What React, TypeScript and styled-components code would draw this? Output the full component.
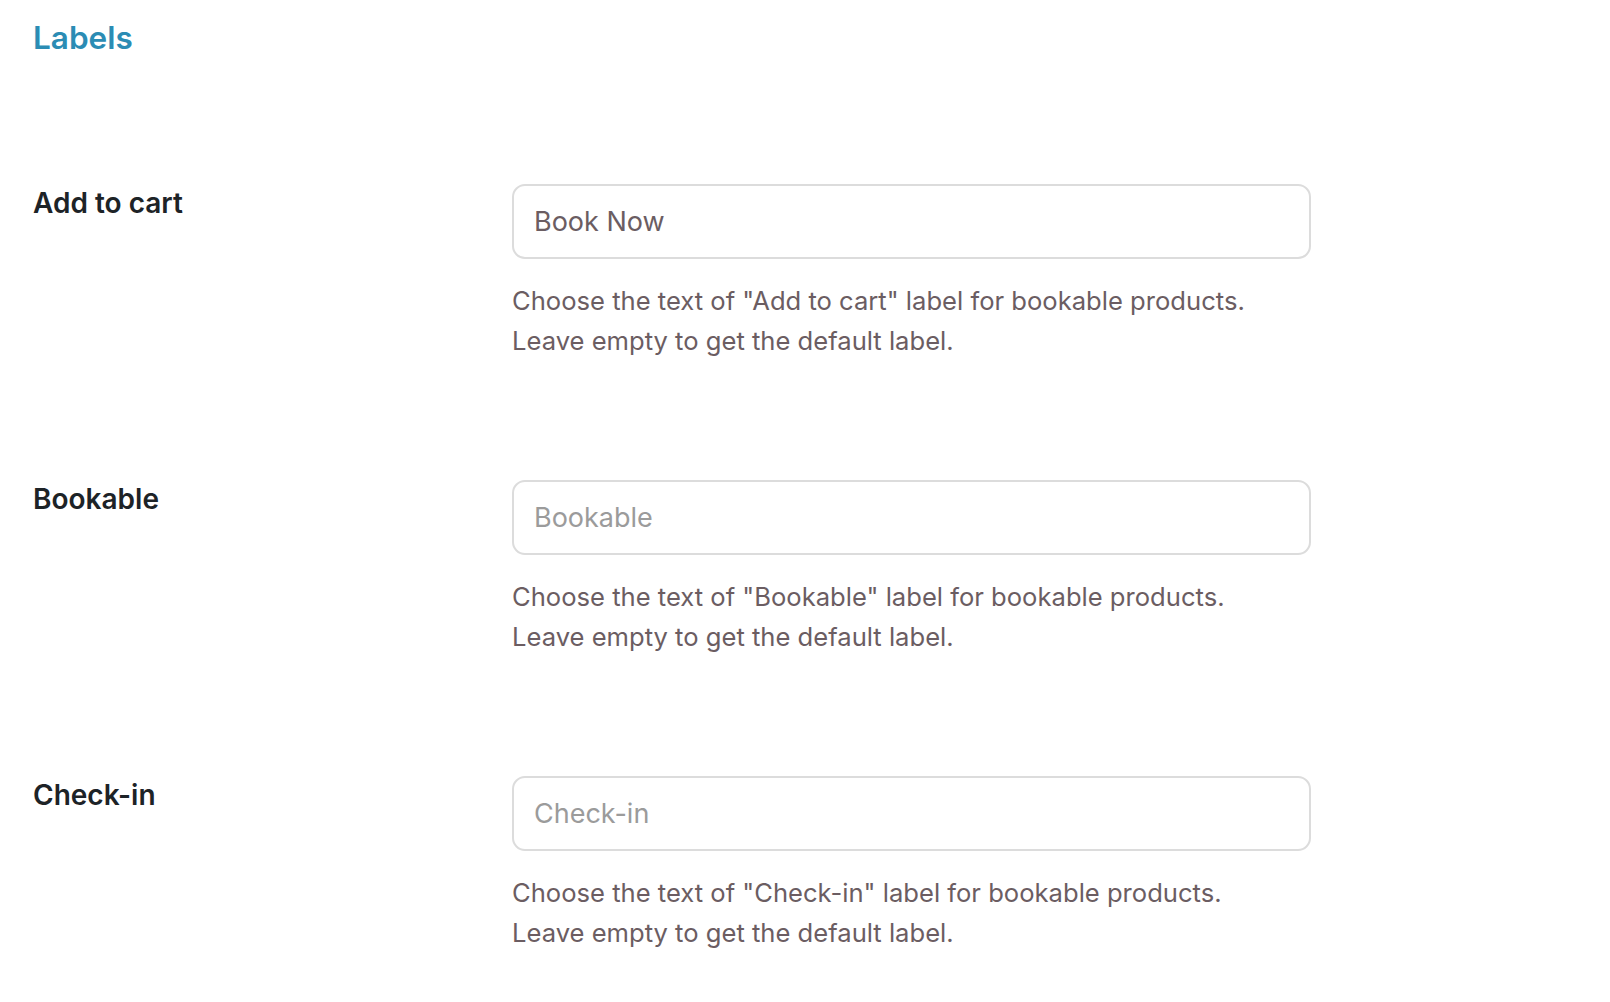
import React from "react";
import styled, { createGlobalStyle } from "styled-components";

const GlobalStyle = createGlobalStyle`
  html, body {
    margin: 0;
    padding: 0;
    background: #ffffff;
  }
  body {
    font-family: Inter, "Noto Sans", "Liberation Sans", sans-serif;
    -webkit-font-smoothing: antialiased;
  }
`;

const Page = styled.main`
  padding: 19px 0 0 33px;
`;

const Heading = styled.h2`
  margin: 0;
  font-size: 31.5px;
  line-height: 38px;
  font-weight: 600;
  color: #2b8cb4;
`;

const Rows = styled.div`
  display: flex;
  flex-direction: column;
  gap: 119px;
  margin-top: 127px;
`;

const Row = styled.section`
  display: grid;
  grid-template-columns: 479px 799px;
  align-items: start;
`;

const Label = styled.label`
  font-size: 28px;
  line-height: 38px;
  font-weight: 600;
  color: #1d2327;
`;

const Field = styled.div`
  display: flex;
  flex-direction: column;
`;

const Input = styled.input`
  box-sizing: border-box;
  width: 100%;
  height: 75px;
  padding: 0 20px;
  border: 2px solid #dcdcdc;
  border-radius: 13px;
  background: #ffffff;
  font-family: inherit;
  font-size: 27px;
  color: #6b5d62;
  outline: none;

  &::placeholder {
    color: #9b9b9b;
    opacity: 1;
  }
`;

const Description = styled.p`
  margin: 22px 0 0;
  font-size: 25.6px;
  line-height: 40px;
  color: #6b5d62;
`;

interface LabelSetting {
  id: string;
  title: string;
  value: string;
}

const settings: LabelSetting[] = [
  { id: "add-to-cart", title: "Add to cart", value: "Book Now" },
  { id: "bookable", title: "Bookable", value: "" },
  { id: "check-in", title: "Check-in", value: "" },
];

const SettingRow = ({ id, title, value }: LabelSetting) => (
  <Row>
    <Label htmlFor={id}>{title}</Label>
    <Field>
      <Input id={id} type="text" defaultValue={value} placeholder={title} />
      <Description>
        Choose the text of "{title}" label for bookable products.
        <br />
        Leave empty to get the default label.
      </Description>
    </Field>
  </Row>
);

const App = () => (
  <>
    <GlobalStyle />
    <Page>
      <Heading>Labels</Heading>
      <Rows>
        {settings.map((s) => (
          <SettingRow key={s.id} {...s} />
        ))}
      </Rows>
    </Page>
  </>
);

export default App;
